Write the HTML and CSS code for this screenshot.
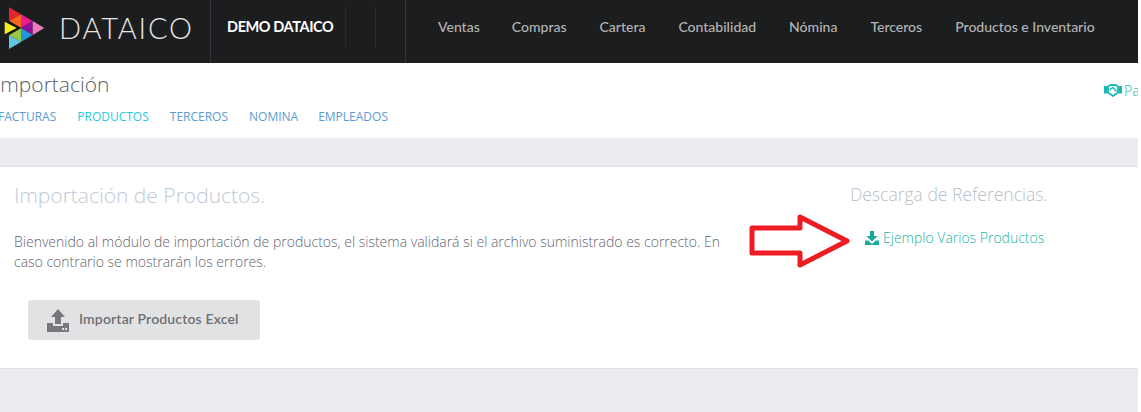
FILE: index.html
```html
<!DOCTYPE html>
<html lang="es">
<head>
  <meta charset="UTF-8">
  <title>Importación - Dataico</title>
  <link rel="stylesheet" href="styles.css">
</head>
<body>
  <header class="topbar">
    <div class="brand">
      <svg class="brand-logo" viewBox="0 0 180 180" width="60" height="60">
        <polygon points="27,22 63,43 27,63" fill="#e8212e"/>
        <polygon points="27,63 63,43 63,84" fill="#f7651e"/>
        <polygon points="63,43 98,63 63,84" fill="#ec1c8e"/>
        <polygon points="98,63 98,105 63,84" fill="#8e0f96"/>
        <polygon points="98,63 133,84 98,105" fill="#e87dbb"/>
        <polygon points="63,84 63,126 27,105" fill="#97ca3d"/>
        <polygon points="63,84 98,105 63,126" fill="#1b98d8"/>
        <polygon points="27,105 63,126 27,147" fill="#62c6e2"/>
        <polygon points="27,63 63,84 27,105" fill="#111214"/>
        <polygon points="14,65 50,84 14,103" fill="#f6ec25"/>
      </svg>
      <span class="brand-name">DATAICO</span>
    </div>
    <div class="company">
      <span class="company-name">DEMO DATAICO</span>
      <span class="company-gap"></span>
    </div>
    <nav class="main-nav">
      <a>Ventas</a>
      <a>Compras</a>
      <a>Cartera</a>
      <a>Contabilidad</a>
      <a>Nómina</a>
      <a>Terceros</a>
      <a>Productos e Inventario</a>
    </nav>
  </header>

  <section class="subheader">
    <div class="subheader-left">
      <h1>Importación</h1>
      <div class="tabs">
        <a>FACTURAS</a>
        <a class="active">PRODUCTOS</a>
        <a>TERCEROS</a>
        <a>NOMINA</a>
        <a>EMPLEADOS</a>
      </div>
    </div>
    <a class="help-link">
      <svg viewBox="0 0 18 13" width="18" height="13">
        <path d="M0 2h3.500v7.500h-3.500zM14.500 2h3.500v7.500h-3.500z" fill="#17bdb2"/>
        <path d="M4 2.500l2.500-1.500h5l2.500 1.500v6l-5 3.500-5-3.500z" fill="none" stroke="#17bdb2" stroke-width="1.800"/>
        <path d="M5.500 6l3.500-2.500 3.500 4" fill="none" stroke="#17bdb2" stroke-width="1.500"/>
      </svg>
      <span>Pa</span>
    </a>
  </section>

  <main class="content">
    <div class="card">
      <div class="card-main">
        <h2>Importación de Productos.</h2>
        <p>Bienvenido al módulo de importación de productos, el sistema validará si el archivo suministrado es correcto. En caso contrario se mostrarán los errores.</p>
        <button class="import-button">
          <svg viewBox="0 0 22 24" width="22" height="24">
            <path d="M11 1l7 8h-4v7h-6v-7h-4z" fill="#76787b"/>
            <path d="M0 15h6v3h10v-3h6v9h-22z" fill="#76787b"/>
            <rect x="15" y="20" width="2" height="2" fill="#e1e2e4"/>
            <rect x="18" y="20" width="2" height="2" fill="#e1e2e4"/>
          </svg>
          <span class="import-label">Importar Productos Excel</span>
        </button>
      </div>
      <div class="card-side">
        <h3>Descarga de Referencias.</h3>
        <a class="download-link">
          <svg viewBox="0 0 14 14" width="14" height="14">
            <path d="M5 0h4v5h3.500l-5.500 5.500-5.500-5.500h3.500z" fill="#17a99c"/>
            <path d="M0 9.500h3l4 3.500 4-3.500h3v4.500h-14z" fill="#17a99c"/>
          </svg>
          Ejemplo Varios Productos
        </a>
      </div>
      <svg class="red-arrow" viewBox="0 0 110 60" width="110" height="60">
        <polygon points="5,14 53,14 53,3 100,27 53,51 53,39 5,39" fill="#fff" stroke="#ed1c24" stroke-width="5" stroke-linejoin="round"/>
      </svg>
    </div>
  </main>
</body>
</html>
```

FILE: styles.css
```css
* {
  margin: 0;
  padding: 0;
  box-sizing: border-box;
}
html {
  height: 100%;
  overflow: hidden;
  background-color: #fff;
}
body {
  font-family: 'Open Sans', sans-serif;
  background-color: #ebebf0;
  display: flex;
  flex-direction: column;
  width: 1138px;
  height: 100%;
}
.topbar {
  display: flex;
  height: 63px;
  background-color: #1c1d1f;
  flex-shrink: 0;
}
.brand {
  display: flex;
  width: 211px;
  border-right: 1px solid #333437;
}
.brand-logo {
  flex-shrink: 0;
  margin-right: -1px;
}
.brand-name {
  font-family: 'Lato', sans-serif;
  font-weight: 300;
  font-size: 29px;
  letter-spacing: 1.8px;
  line-height: 56px;
  color: #e6e6e6;
}
.company {
  display: flex;
  width: 195px;
  border-right: 1px solid #333437;
}
.company-name {
  font-family: 'Lato', sans-serif;
  font-weight: 700;
  font-size: 14.500px;
  letter-spacing: -0.4px;
  line-height: 54px;
  color: #fff;
  padding-left: 16px;
  width: 134px;
  height: 52px;
  white-space: nowrap;
}
.company-gap {
  width: 31px;
  height: 40px;
  margin-top: 7px;
  border-left: 1px solid #2b2c2f;
  border-right: 1px solid #2b2c2f;
}
.main-nav {
  display: flex;
  gap: 33px;
  padding-left: 32px;
}
.main-nav a {
  font-family: 'Lato', sans-serif;
  font-size: 14px;
  font-weight: 500;
  line-height: 54px;
  color: #b4b4b4;
  white-space: nowrap;
}
.main-nav a:first-child {
  margin-right: -1px;
}
.subheader {
  display: flex;
  justify-content: space-between;
  height: 75px;
  background-color: #fff;
  flex-shrink: 0;
}
.subheader-left {
  margin-left: -5px;
  padding-top: 7px;
}
.subheader h1 {
  font-weight: 300;
  font-size: 21px;
  line-height: 29px;
  color: #5a5f66;
}
.tabs {
  display: flex;
  gap: 21px;
  margin-top: 9px;
  margin-left: 3px;
}
.tabs a {
  font-size: 12px;
  line-height: 17px;
  color: #5b9bd5;
}
.tabs a:last-child {
  margin-left: -1px;
}
.tabs a.active {
  color: #1ecbe1;
}
.help-link {
  display: flex;
  align-items: center;
  gap: 2px;
  height: 16px;
  width: 34px;
  margin-top: 19px;
  font-size: 14px;
  font-weight: 300;
  color: #17bdb2;
}
.help-link svg {
  flex-shrink: 0;
}
.content {
  flex: 1;
  padding-top: 28px;
}
.card {
  position: relative;
  display: flex;
  height: 203px;
  background-color: #fff;
  border-top: 1px solid #e0e2e6;
  border-bottom: 1px solid #dfe2e6;
}
.card-main {
  width: 850px;
  padding: 14px 120px 0 14px;
}
.card-main h2 {
  font-weight: 300;
  font-size: 21px;
  line-height: 29px;
  color: #c0cad6;
}
.card-main p {
  margin-top: 22px;
  font-size: 14px;
  font-weight: 300;
  line-height: 20px;
  color: #5f6670;
}
.import-button {
  display: flex;
  align-items: center;
  gap: 10px;
  width: 232px;
  height: 40px;
  margin-top: 28px;
  margin-left: 14px;
  padding-left: 19px;
  border: none;
  border-radius: 4px;
  background-color: #e1e2e4;
  font-family: 'Lato', sans-serif;
  font-size: 14px;
  font-weight: 600;
  letter-spacing: 0.15px;
  color: #6e6f72;
}
.import-label {
  margin-bottom: 3px;
}
.card-side {
  padding-top: 15px;
}
.card-side h3 {
  font-weight: 300;
  font-size: 17.500px;
  line-height: 24px;
  color: #b8c0cb;
}
.download-link {
  display: flex;
  align-items: center;
  gap: 4px;
  margin-top: 22px;
  margin-left: 15px;
  font-size: 14px;
  font-weight: 300;
  line-height: 20px;
  color: #17b5a8;
}
.red-arrow {
  position: absolute;
  left: 747px;
  top: 47px;
}
```
